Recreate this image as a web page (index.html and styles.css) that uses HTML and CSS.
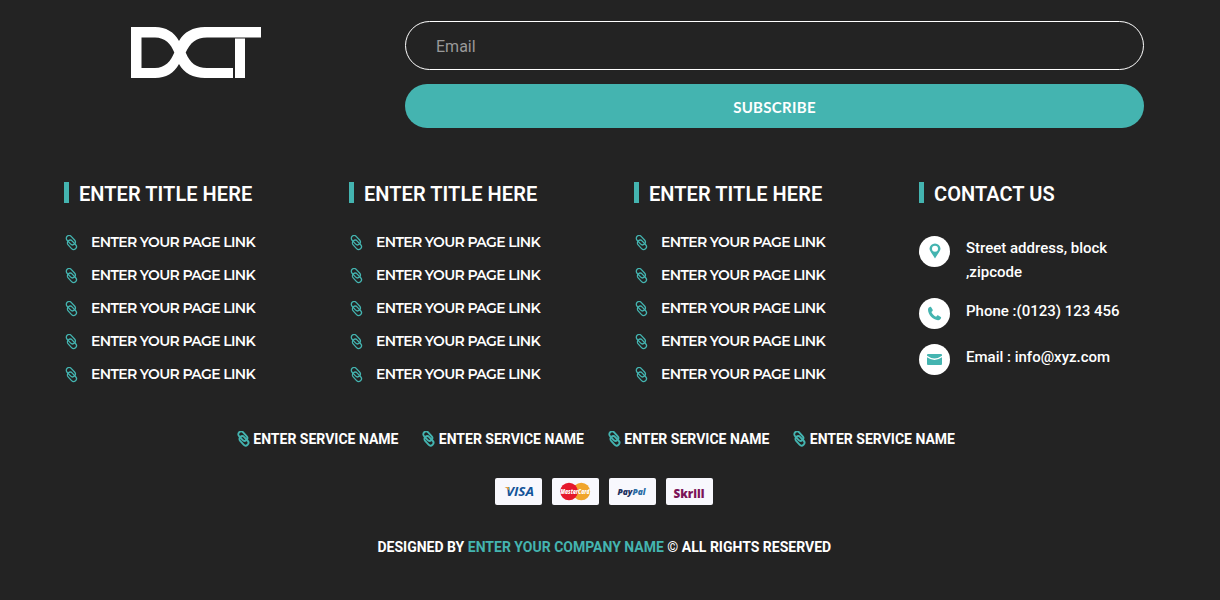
FILE: index.html
```html
<!DOCTYPE html>
<html lang="en">
<head>
    <meta charset="UTF-8">
    <meta name="viewport" content="width=device-width, initial-scale=1.0">
    <title>Footer</title>
    <link rel="stylesheet" href="styles.css">
</head>
<body>
    <!-- shared icons -->
    <svg class="sprite">
        <symbol id="chain" viewBox="0 0 14 16">
            <g fill="none" stroke="currentColor" transform="rotate(47 7.500 7.500)">
                <rect x="0" y="3.600" width="10.600" height="5.600" rx="2.800"/>
                <rect x="4.200" y="6" width="10.600" height="5.600" rx="2.800"/>
            </g>
        </symbol>
    </svg>

    <footer class="footer">
        <div class="container">
            <div class="footer-top">
                <div class="logo">
                    <svg width="130" height="51" viewBox="0 0 130 51">
                        <path fill="#fff" fill-rule="evenodd" d="M0 0H24C35 0 43 5 48 14C53 5 62 0 74 0H130V10.500H76C65 10.500 59 16 54.700 25.500C59 36 65 41 76 41H102V51H74C62 51 53 46 48 37C43 46 35 51 24 51H0zM10.500 10.500V41H24C34 41 40 34 43.300 25.500C40 17 34 10.500 24 10.500z"/>
                        <path fill="#fff" d="M104 11.500h10v39.500h-10z"/>
                    </svg>
                </div>
                <form class="subscribe">
                    <input type="email" placeholder="Email">
                    <button type="button">SUBSCRIBE</button>
                </form>
            </div>

            <div class="footer-columns">
                <div class="column">
                    <h3>ENTER TITLE HERE</h3>
                    <ul class="links">
                        <li><svg class="chain"><use href="#chain"/></svg><a href="#">ENTER YOUR PAGE LINK</a></li>
                        <li><svg class="chain"><use href="#chain"/></svg><a href="#">ENTER YOUR PAGE LINK</a></li>
                        <li><svg class="chain"><use href="#chain"/></svg><a href="#">ENTER YOUR PAGE LINK</a></li>
                        <li><svg class="chain"><use href="#chain"/></svg><a href="#">ENTER YOUR PAGE LINK</a></li>
                        <li><svg class="chain"><use href="#chain"/></svg><a href="#">ENTER YOUR PAGE LINK</a></li>
                    </ul>
                </div>
                <div class="column">
                    <h3>ENTER TITLE HERE</h3>
                    <ul class="links">
                        <li><svg class="chain"><use href="#chain"/></svg><a href="#">ENTER YOUR PAGE LINK</a></li>
                        <li><svg class="chain"><use href="#chain"/></svg><a href="#">ENTER YOUR PAGE LINK</a></li>
                        <li><svg class="chain"><use href="#chain"/></svg><a href="#">ENTER YOUR PAGE LINK</a></li>
                        <li><svg class="chain"><use href="#chain"/></svg><a href="#">ENTER YOUR PAGE LINK</a></li>
                        <li><svg class="chain"><use href="#chain"/></svg><a href="#">ENTER YOUR PAGE LINK</a></li>
                    </ul>
                </div>
                <div class="column">
                    <h3>ENTER TITLE HERE</h3>
                    <ul class="links">
                        <li><svg class="chain"><use href="#chain"/></svg><a href="#">ENTER YOUR PAGE LINK</a></li>
                        <li><svg class="chain"><use href="#chain"/></svg><a href="#">ENTER YOUR PAGE LINK</a></li>
                        <li><svg class="chain"><use href="#chain"/></svg><a href="#">ENTER YOUR PAGE LINK</a></li>
                        <li><svg class="chain"><use href="#chain"/></svg><a href="#">ENTER YOUR PAGE LINK</a></li>
                        <li><svg class="chain"><use href="#chain"/></svg><a href="#">ENTER YOUR PAGE LINK</a></li>
                    </ul>
                </div>
                <div class="column">
                    <h3>CONTACT US</h3>
                    <ul class="contact">
                        <li>
                            <span class="circle pin">
                                <svg width="12" height="16" viewBox="0 0 12 16"><path fill="currentColor" fill-rule="evenodd" d="M6 .5a5.500 5.500 0 0 0-5.500 5.300C.5 8.500 4 11.500 6 15.500c2-4 5.500-7 5.500-9.700A5.500 5.500 0 0 0 6 .5zM6 2.800a3 3 0 1 1 0 6 3 3 0 0 1 0-6z"/></svg>
                            </span>
                            <p>Street address, block<br>,zipcode</p>
                        </li>
                        <li>
                            <span class="circle">
                                <svg width="15" height="15" viewBox="0 0 15 15"><path fill="currentColor" d="M3.200.8C2 1.200.9 2.200 1 3.800c.3 5.200 4.700 10 10 10.400 1.500.1 2.700-.9 3.100-2.200.1-.4 0-.7-.3-.9l-2.500-1.700c-.4-.2-.8-.2-1.100.1L9.100 10.700C7 9.700 5.300 8 4.400 5.900L5.500 4.900c.3-.3.4-.7.2-1.100L4.200 1.200c-.2-.4-.6-.6-1-.4z"/></svg>
                            </span>
                            <p>Phone :(0123) 123 456</p>
                        </li>
                        <li>
                            <span class="circle">
                                <svg width="15" height="11" viewBox="0 0 15 11"><path fill="currentColor" d="M1 0h13q1 0 1 1v.8Q11 4.600 7.500 4.600T0 1.800V1q0-1 1-1zM0 3.200Q4 6 7.500 6T15 3.200V10q0 1-1 1H1q-1 0-1-1z"/></svg>
                            </span>
                            <p>Email : info@xyz.com</p>
                        </li>
                    </ul>
                </div>
            </div>

            <div class="services">
                <a href="#"><svg class="chain bold"><use href="#chain"/></svg>ENTER SERVICE NAME</a>
                <a href="#"><svg class="chain bold"><use href="#chain"/></svg>ENTER SERVICE NAME</a>
                <a href="#"><svg class="chain bold"><use href="#chain"/></svg>ENTER SERVICE NAME</a>
                <a href="#"><svg class="chain bold"><use href="#chain"/></svg>ENTER SERVICE NAME</a>
            </div>

            <div class="payments">
                <div class="card">
                    <svg width="47" height="27">
                        <text class="visa" x="11" y="18.300" textLength="28" lengthAdjust="spacingAndGlyphs">VISA</text>
                        <path fill="#e9a23b" d="M9.500 9h4l1.300 4Q13 10.500 9.500 9z"/>
                    </svg>
                </div>
                <div class="card">
                    <svg width="47" height="27">
                        <circle cx="29.300" cy="13.500" r="8.800" fill="#f0a52c"/>
                        <circle cx="17" cy="13.500" r="8.800" fill="#e5182c"/>
                        <text class="mastercard" x="8.500" y="16" textLength="29" lengthAdjust="spacingAndGlyphs">MasterCard</text>
                    </svg>
                </div>
                <div class="card">
                    <svg width="47" height="27">
                        <text class="paypal" x="8.500" y="16.500" textLength="28" lengthAdjust="spacingAndGlyphs">Pay<tspan fill="#2a6da5">Pal</tspan></text>
                    </svg>
                </div>
                <div class="card">
                    <svg width="47" height="27">
                        <text class="skrill" x="7.500" y="19.500" textLength="31" lengthAdjust="spacingAndGlyphs">Skrill</text>
                    </svg>
                </div>
            </div>

            <p class="copyright">DESIGNED BY <a href="#">ENTER YOUR COMPANY NAME</a> © ALL RIGHTS RESERVED</p>
        </div>
    </footer>
</body>
</html>
```
FILE: styles.css
```css
* {
    box-sizing: border-box;
}
body {
    margin: 0;
    background-color: #232323;
    color: #fff;
    font-family: Roboto, sans-serif;
}
a {
    color: inherit;
    text-decoration: none;
}
ul {
    list-style: none;
    margin: 0;
    padding: 0;
}
.sprite {
    display: none;
}
.footer {
    width: 1208px;
    height: 600px;
    overflow: hidden;
    padding-top: 21px;
}
.container {
    width: 1140px;
    margin-left: 34px;
    padding-left: 30px;
}

/* logo and newsletter */
.footer-top {
    display: grid;
    grid-template-columns: 341px 739px;
    height: 161px;
}
.logo {
    padding: 6px 0 0 67px;
}
.logo svg {
    display: block;
}
.subscribe {
    display: flex;
    flex-direction: column;
    gap: 14px;
}
.subscribe input {
    height: 49px;
    padding: 2px 30px 0;
    border: 1px solid #fff;
    border-radius: 25px;
    background: transparent;
    font: 16px Roboto, sans-serif;
    color: #fff;
}
.subscribe input::placeholder {
    color: #999;
}
.subscribe button {
    height: 44px;
    padding: 1px 0 0;
    border: none;
    border-radius: 22px;
    background-color: #44b4b0;
    color: #fff;
    font: 700 15px Lato, sans-serif;
    letter-spacing: 0.3px;
}

/* link columns */
.footer-columns {
    display: grid;
    grid-template-columns: repeat(4, 285px);
    height: 248px;
}
.column h3 {
    height: 21px;
    margin: 0;
    padding-left: 10px;
    border-left: 5px solid #44b4b0;
    font-size: 20px;
    font-weight: 600;
    line-height: 25px;
    letter-spacing: 0.05px;
}
.chain {
    width: 14px;
    height: 16px;
    color: #44b4b0;
    stroke-width: 1.3;
}
.chain.bold {
    stroke-width: 1.9;
}
.links {
    padding-top: 23px;
}
.links li {
    display: flex;
    align-items: center;
    height: 33px;
    gap: 13px;
}
.links a {
    padding-bottom: 2px;
    font: 600 14px Montserrat, Inter, sans-serif;
    letter-spacing: -0.63px;
}

/* contact */
.contact {
    display: flex;
    flex-direction: column;
    gap: 15px;
    padding-top: 33px;
}
.contact li {
    display: flex;
    gap: 16px;
}
.contact p {
    margin: 1px 0 0;
    font-size: 15px;
    font-weight: 500;
    line-height: 24px;
}
.contact li:first-child p {
    margin: 0 0 -1px;
}
.circle {
    display: flex;
    align-items: center;
    justify-content: center;
    width: 31px;
    height: 31px;
    border-radius: 50%;
    background-color: #fff;
    color: #44b4b0;
}
.pin {
    padding-bottom: 2px;
}

/* services, payments, copyright */
.services {
    display: flex;
    gap: 23px;
    padding-left: 172px;
    font-size: 14px;
    font-weight: 700;
    line-height: 18px;
}
.services a {
    display: flex;
    align-items: center;
    gap: 3.3px;
}
.payments {
    display: flex;
    gap: 10px;
    margin-top: 30px;
    padding-left: 431px;
}
.card {
    width: 47px;
    height: 27px;
    border-radius: 2px;
    background-color: #f8f8fd;
}
.card svg {
    display: block;
}
.visa {
    font: italic 700 13px "Open Sans", sans-serif;
    fill: #135499;
}
.mastercard {
    font: italic 800 6.5px "Open Sans", sans-serif;
    fill: #fff;
}
.paypal {
    font: italic 800 9px "Open Sans", sans-serif;
    fill: #1d315f;
}
.skrill {
    font: 800 13px "Open Sans", sans-serif;
    fill: #7c1458;
}
.copyright {
    margin: 33px 0 0 313.5px;
    font-size: 14px;
    font-weight: 700;
    line-height: 18px;
}
.copyright a {
    color: #44b4b0;
}
```
